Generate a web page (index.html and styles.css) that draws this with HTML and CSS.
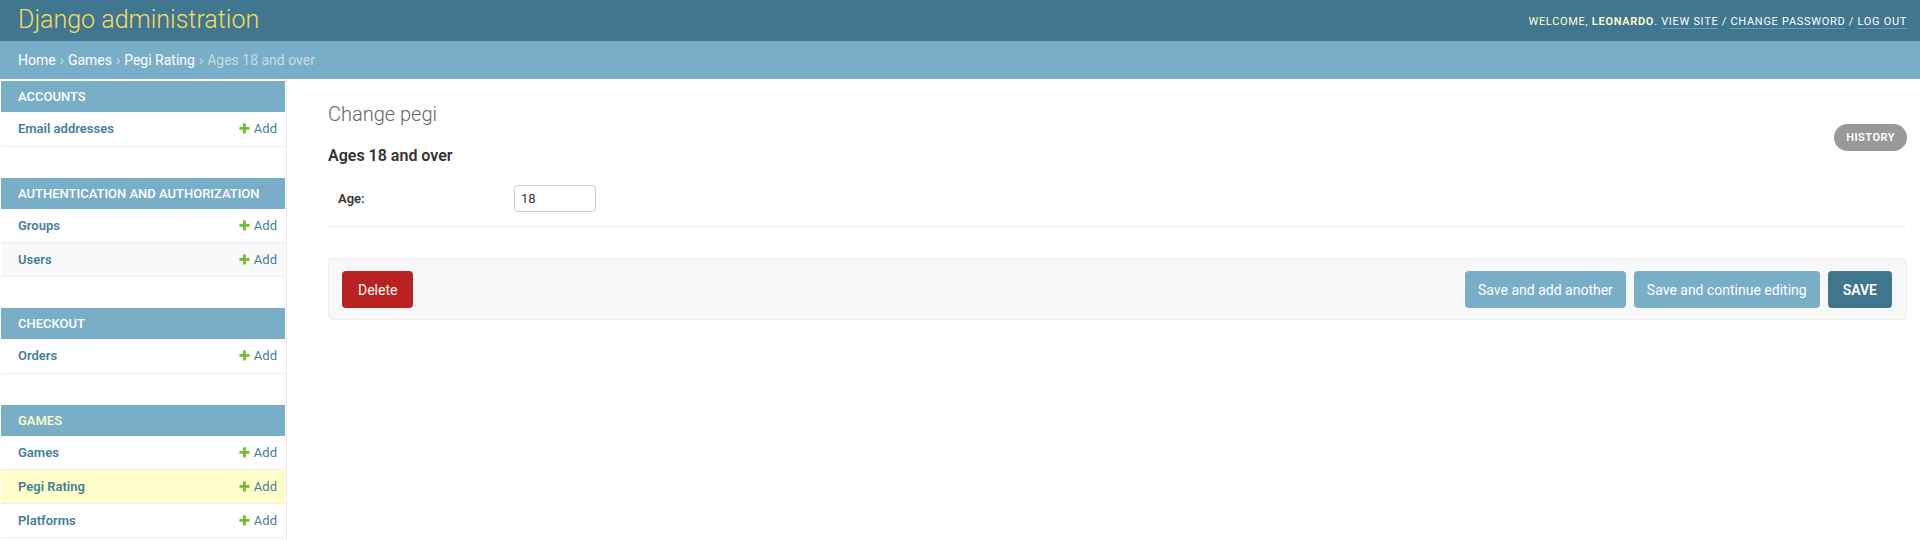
FILE: index.html
```html
<!DOCTYPE html>
<html lang="en">
<head>
<meta charset="utf-8">
<title>Change pegi | Django site admin</title>
<link rel="stylesheet" href="styles.css">
</head>
<body>
<header class="header">
  <h1 class="branding">Django administration</h1>
  <div class="user-tools">
    Welcome, <strong>leonardo</strong>.
    <a href="#">View site</a> /
    <a href="#">Change password</a> /
    <a href="#">Log out</a>
  </div>
</header>
<nav class="breadcrumbs">
  <a href="#">Home</a><span class="sep">›</span><a href="#">Games</a><span class="sep">›</span><a href="#">Pegi Rating</a><span class="sep">›</span>Ages 18 and over
</nav>
<div class="main">
  <aside class="sidebar">
    <table class="module">
      <caption>Accounts</caption>
      <tr><th><a href="#">Email addresses</a></th><td><a class="addlink" href="#"><svg class="plus" viewBox="0 0 1792 1792"><path d="M1600 796v192q0 40-28 68t-68 28h-416v416q0 40-28 68t-68 28h-192q-40 0-68-28t-28-68v-416h-416q-40 0-68-28t-28-68v-192q0-40 28-68t68-28h416v-416q0-40 28-68t68-28h192q40 0 68 28t28 68v416h416q40 0 68 28t28 68z"/></svg>Add</a></td></tr>
    </table>
    <table class="module">
      <caption>Authentication and Authorization</caption>
      <tr><th><a href="#">Groups</a></th><td><a class="addlink" href="#"><svg class="plus" viewBox="0 0 1792 1792"><path d="M1600 796v192q0 40-28 68t-68 28h-416v416q0 40-28 68t-68 28h-192q-40 0-68-28t-28-68v-416h-416q-40 0-68-28t-28-68v-192q0-40 28-68t68-28h416v-416q0-40 28-68t68-28h192q40 0 68 28t28 68v416h416q40 0 68 28t28 68z"/></svg>Add</a></td></tr>
      <tr class="row2"><th><a href="#">Users</a></th><td><a class="addlink" href="#"><svg class="plus" viewBox="0 0 1792 1792"><path d="M1600 796v192q0 40-28 68t-68 28h-416v416q0 40-28 68t-68 28h-192q-40 0-68-28t-28-68v-416h-416q-40 0-68-28t-28-68v-192q0-40 28-68t68-28h416v-416q0-40 28-68t68-28h192q40 0 68 28t28 68v416h416q40 0 68 28t28 68z"/></svg>Add</a></td></tr>
    </table>
    <table class="module">
      <caption>Checkout</caption>
      <tr><th><a href="#">Orders</a></th><td><a class="addlink" href="#"><svg class="plus" viewBox="0 0 1792 1792"><path d="M1600 796v192q0 40-28 68t-68 28h-416v416q0 40-28 68t-68 28h-192q-40 0-68-28t-28-68v-416h-416q-40 0-68-28t-28-68v-192q0-40 28-68t68-28h416v-416q0-40 28-68t68-28h192q40 0 68 28t28 68v416h416q40 0 68 28t28 68z"/></svg>Add</a></td></tr>
    </table>
    <table class="module current-app">
      <caption>Games</caption>
      <tr><th><a href="#">Games</a></th><td><a class="addlink" href="#"><svg class="plus" viewBox="0 0 1792 1792"><path d="M1600 796v192q0 40-28 68t-68 28h-416v416q0 40-28 68t-68 28h-192q-40 0-68-28t-28-68v-416h-416q-40 0-68-28t-28-68v-192q0-40 28-68t68-28h416v-416q0-40 28-68t68-28h192q40 0 68 28t28 68v416h416q40 0 68 28t28 68z"/></svg>Add</a></td></tr>
      <tr class="current-model"><th><a href="#">Pegi Rating</a></th><td><a class="addlink" href="#"><svg class="plus" viewBox="0 0 1792 1792"><path d="M1600 796v192q0 40-28 68t-68 28h-416v416q0 40-28 68t-68 28h-192q-40 0-68-28t-28-68v-416h-416q-40 0-68-28t-28-68v-192q0-40 28-68t68-28h416v-416q0-40 28-68t68-28h192q40 0 68 28t28 68v416h416q40 0 68 28t28 68z"/></svg>Add</a></td></tr>
      <tr><th><a href="#">Platforms</a></th><td><a class="addlink" href="#"><svg class="plus" viewBox="0 0 1792 1792"><path d="M1600 796v192q0 40-28 68t-68 28h-416v416q0 40-28 68t-68 28h-192q-40 0-68-28t-28-68v-416h-416q-40 0-68-28t-28-68v-192q0-40 28-68t68-28h416v-416q0-40 28-68t68-28h192q40 0 68 28t28 68v416h416q40 0 68 28t28 68z"/></svg>Add</a></td></tr>
    </table>
  </aside>
  <main class="content">
    <h1 class="page-title">Change pegi</h1>
    <div class="subtitle-row">
      <h2 class="subtitle">Ages 18 and over</h2>
      <a class="history" href="#">History</a>
    </div>
    <form class="change-form">
      <div class="form-row">
        <label class="field-label" for="age">Age:</label>
        <input class="field-input" id="age" type="text" value="18">
      </div>
      <div class="submit-row">
        <a class="btn btn-delete" href="#">Delete</a>
        <div class="btn-group">
          <span class="btn btn-secondary">Save and add another</span>
          <span class="btn btn-secondary">Save and continue editing</span>
          <span class="btn btn-default">SAVE</span>
        </div>
      </div>
    </form>
  </main>
</div>
</body>
</html>
```
FILE: styles.css
```css
* { box-sizing: border-box; }
html, body { margin: 0; padding: 0; }
body {
  font-family: Roboto, "Liberation Sans", sans-serif;
  font-size: 14px;
  color: #333;
  background: #fff;
}
a { text-decoration: none; }

.header {
  height: 41px;
  display: flex;
  justify-content: space-between;
  align-items: center;
  padding: 0 13px 0 18px;
  background: #417690;
  color: #ffc;
}
.branding {
  margin: 0;
  font-size: 25px;
  font-weight: 300;
  color: #f5dd5d;
  line-height: 28px;
  padding-bottom: 2px;
}
.user-tools {
  font-size: 11px;
  letter-spacing: 0.7px;
  text-transform: uppercase;
  color: #ffc;
  padding-top: 2px;
}
.user-tools strong { font-weight: 600; color: #ffc; }
.user-tools a {
  color: #fff;
  border-bottom: 1px solid rgba(255,255,255,0.25);
}

.breadcrumbs {
  height: 38px;
  display: flex;
  align-items: center;
  padding: 0 18px;
  background: #79aec8;
  color: #c4dce8;
  font-size: 14px;
}
.breadcrumbs a { color: #fff; }
.breadcrumbs .sep { padding: 0 4px; }

.main { display: flex; align-items: stretch; }

.sidebar {
  flex: 0 0 287px;
  padding: 2px 1px 0 1px;
  border-right: 1px solid #eaeaea;
  min-height: 461px;
}
.module {
  width: 100%;
  border-collapse: collapse;
  margin-bottom: 31px;
}
.module:last-child { margin-bottom: 0; }
.module caption {
  background: #79aec8;
  color: #fff;
  text-align: left;
  text-transform: uppercase;
  font-size: 13px;
  letter-spacing: 0;
  font-weight: 500;
  line-height: 15px;
  padding: 8px 8px 8px 17px;
  white-space: nowrap;
}
.current-app caption { color: #ffc; }
.module th, .module td {
  font-size: 13px;
  line-height: 17px;
  height: 34px;
  padding: 8px;
  border-bottom: 1px solid #eee;
  vertical-align: top;
}
.module th {
  text-align: left;
  font-weight: 600;
  padding-left: 17px;
  width: 100%;
}
.module td { white-space: nowrap; }
.module a { color: #447e9b; }
.row2 { background: #f9f9f9; }
.current-model { background: #ffc; }
.addlink { white-space: nowrap; }
.plus {
  width: 13px;
  height: 13px;
  fill: #70bf2b;
  vertical-align: -2px;
  margin-right: 3px;
}

.content {
  flex: 1;
  padding: 23px 13px 0 41px;
}
.page-title {
  margin: 0 0 20px;
  font-size: 20px;
  font-weight: 300;
  color: #666;
  line-height: 24px;
}
.subtitle-row {
  display: flex;
  justify-content: space-between;
  align-items: flex-start;
}
.subtitle {
  margin: 0;
  font-size: 16px;
  font-weight: 600;
  color: #333;
  line-height: 19px;
}
.history {
  margin-top: -22px;
  height: 27px;
  padding: 0 12px;
  display: flex;
  align-items: center;
  border-radius: 15px;
  background: #999;
  color: #fff;
  font-size: 11px;
  font-weight: 600;
  letter-spacing: 0.5px;
  text-transform: uppercase;
}

.change-form { margin: 10px 0 0; }
.form-row {
  display: flex;
  align-items: center;
  padding: 10px 10px 14px;
  border-bottom: 1px solid #eee;
}
.field-label {
  width: 176px;
  font-size: 13px;
  font-weight: 600;
  color: #333;
}
.field-input {
  width: 82px;
  height: 27px;
  padding: 0 6px;
  border: 1px solid #ccc;
  border-radius: 4px;
  font-family: Roboto, "Liberation Sans", sans-serif;
  font-size: 13px;
  color: #333;
}

.submit-row {
  margin-top: 31px;
  display: flex;
  justify-content: space-between;
  align-items: center;
  padding: 12px 14px 11px 13px;
  background: #f8f8f8;
  border: 1px solid #eee;
  border-radius: 4px;
}
.btn-group { display: flex; gap: 8px; }
.btn {
  height: 37px;
  display: inline-flex;
  align-items: center;
  padding: 0 13px;
  border-radius: 4px;
  color: #fff;
  font-size: 14px;
}
.btn-delete { background: #ba2121; padding: 0 16px; }
.btn-secondary { background: #79aec8; }
.btn-default { background: #417690; font-weight: 600; padding: 0 15px; }
```
